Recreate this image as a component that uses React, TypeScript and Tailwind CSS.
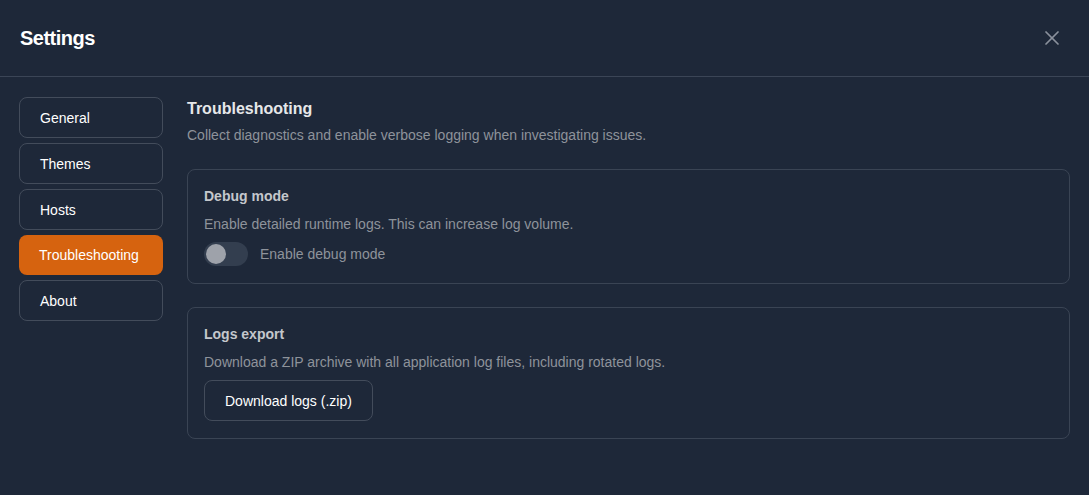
import React, { useState } from 'react';
import { X } from 'lucide-react';

const sections = ['General', 'Themes', 'Hosts', 'Troubleshooting', 'About'];

const Card: React.FC<{ title: string; description: string; children: React.ReactNode }> = ({ title, description, children }) => (
  <div className="rounded-lg border border-[#3a4454] px-4 pt-4 pb-[17px]">
    <h3 className="text-sm font-semibold leading-5 text-[#c4c7cc]">{title}</h3>
    <p className="mt-2 text-sm leading-5 text-[#8e939b]">{description}</p>
    <div className="mt-2">{children}</div>
  </div>
);

export default function App() {
  const [active, setActive] = useState('Troubleshooting');
  const [debug, setDebug] = useState(false);

  return (
    <div className="min-h-[495px] w-full bg-[#1e2839] font-['Liberation_Sans',Arial,sans-serif] text-white">
      <div className="flex h-[77px] items-center justify-between border-b border-[#3b4556] px-5">
        <h1 className="text-xl font-bold tracking-tight">Settings</h1>
        <button className="mr-[5px] text-[#8a919c]">
          <X className="h-6 w-6" strokeWidth={1.75} />
        </button>
      </div>

      <div className="flex gap-6 pl-[19px] pr-[19px] pt-5">
        <nav className="flex w-[144px] shrink-0 flex-col gap-[5px]">
          {sections.map((s) => (
            <button
              key={s}
              onClick={() => setActive(s)}
              className={
                s === active
                  ? 'h-[40px] rounded-lg bg-[#d6630f] px-5 text-left text-sm text-white'
                  : 'h-[41px] rounded-lg border border-[#434c5b] px-5 text-left text-sm text-white'
              }
            >
              {s}
            </button>
          ))}
        </nav>

        <main className="flex-1">
          <h2 className="text-base font-bold leading-6 text-[#e6e7e9]">Troubleshooting</h2>
          <p className="mt-1 text-sm leading-5 text-[#8e939b]">
            Collect diagnostics and enable verbose logging when investigating issues.
          </p>

          <div className="mt-6 flex flex-col gap-[23px]">
            <Card title="Debug mode" description="Enable detailed runtime logs. This can increase log volume.">
              <label className="flex items-center gap-3">
                <button
                  onClick={() => setDebug(!debug)}
                  className={
                    debug
                      ? 'flex h-6 w-11 items-center justify-end rounded-full bg-[#d6630f] px-0.5'
                      : 'flex h-6 w-11 items-center rounded-full bg-[#333e4f] px-0.5'
                  }
                >
                  <span className="h-5 w-5 rounded-full bg-[#9ea2aa]" />
                </button>
                <span className="text-sm text-[#8e939b]">Enable debug mode</span>
              </label>
            </Card>

            <Card
              title="Logs export"
              description="Download a ZIP archive with all application log files, including rotated logs."
            >
              <button className="h-[41px] rounded-lg border border-[#434c5b] px-5 text-sm text-white">
                Download logs (.zip)
              </button>
            </Card>
          </div>
        </main>
      </div>
    </div>
  );
}
